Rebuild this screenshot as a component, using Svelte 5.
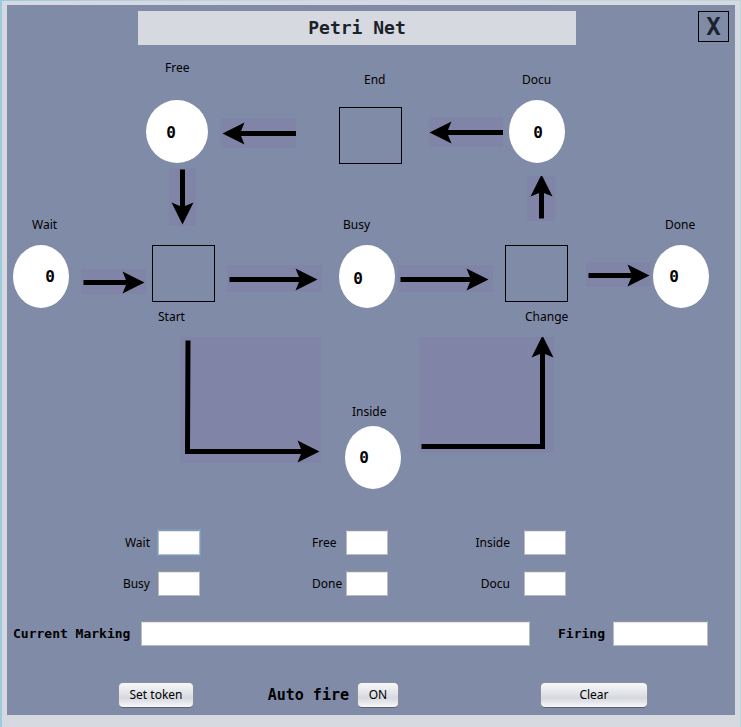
<script>
  const places = [
    { id: 'free', name: 'Free', cx: 177, cy: 131.5, rx: 31, lx: 165, ly: 72, tx: 171, ty: 138 },
    { id: 'docu', name: 'Docu', cx: 537, cy: 131.5, rx: 28, lx: 522, ly: 84, tx: 538, ty: 138 },
    { id: 'wait', name: 'Wait', cx: 41, cy: 276.5, rx: 28, lx: 32, ly: 229, tx: 50, ty: 282 },
    { id: 'busy', name: 'Busy', cx: 367, cy: 276.5, rx: 28, lx: 343, ly: 229, tx: 358, ty: 284 },
    { id: 'done', name: 'Done', cx: 681, cy: 276.5, rx: 28, lx: 665, ly: 229, tx: 674, ty: 282 },
    { id: 'inside', name: 'Inside', cx: 373, cy: 457.5, rx: 28, lx: 352, ly: 416, tx: 364, ty: 463 }
  ];

  const transitions = [
    { name: 'End', x: 339.5, y: 107.5, lx: 364, ly: 84 },
    { name: 'Start', x: 152.5, y: 245.5, lx: 158, ly: 321 },
    { name: 'Change', x: 505.5, y: 245.5, lx: 525, ly: 321 }
  ];

  // box: tinted area [x, y, w, h]; line: shaft points; tip: head position and rotation
  const arcs = [
    { box: [221, 118, 75, 30], line: '296,133.5 238,133.5', tip: [222.5, 133.5, 180] },
    { box: [429, 117, 74, 30], line: '503,132.5 446,132.5', tip: [429.5, 132.5, 180] },
    { box: [169, 168, 27, 58], line: '182.5,169.5 182.5,208', tip: [182.5, 224.5, 90] },
    { box: [527, 176, 28, 45], line: '541.5,218.5 541.5,191', tip: [541.5, 174.5, -90] },
    { box: [81, 269, 65, 25], line: '83.5,282.5 128,282.5', tip: [144.5, 282.5, 0] },
    { box: [227, 265, 95, 27], line: '229.5,279.5 301,279.5', tip: [317.5, 279.5, 0] },
    { box: [398, 265, 95, 27], line: '400.5,279.5 472,279.5', tip: [488.5, 279.5, 0] },
    { box: [586, 262, 65, 25], line: '588.5,275.5 633,275.5', tip: [649.5, 275.5, 0] },
    { box: [180, 337, 141, 126], line: '188,340.5 187.5,451.5 303,451.5', tip: [319.5, 451.5, 0] },
    { box: [419, 337, 135, 116], line: '421.5,446.5 542.5,446.5 542.5,352', tip: [542.5, 335.5, -90] }
  ];

  const fields = [
    { id: 'wait', name: 'Wait', col: 'first' },
    { id: 'free', name: 'Free', col: 'second' },
    { id: 'inside', name: 'Inside', col: 'third' },
    { id: 'busy', name: 'Busy', col: 'first' },
    { id: 'done', name: 'Done', col: 'second' },
    { id: 'docu', name: 'Docu', col: 'third' }
  ];

  const blank = (value) => ({ free: value, docu: value, wait: value, busy: value, done: value, inside: value });

  let tokens = $state(blank(0));
  let entry = $state(blank(''));
  let active = $state('wait');
  let marking = $state('');
  let firing = $state('');
  let open = $state(true);

  function setTokens() {
    for (const key in entry) tokens[key] = Number(entry[key]) || 0;
  }

  function clearAll() {
    tokens = blank(0);
    entry = blank('');
    marking = '';
    firing = '';
  }
</script>

<div class="window">
  {#if open}
    <main class="panel">
      <header>
        <h1>Petri Net</h1>
        <button class="close" aria-label="Close" onclick={() => (open = false)}>X</button>
      </header>

      <svg class="net" viewBox="7 45 728 485" width="728" height="485" role="img" aria-label="Petri net diagram">
        {#each arcs as { box, line, tip }}
          <svg x={box[0]} y={box[1]} width={box[2]} height={box[3]} viewBox={box.join(' ')}>
            <rect class="tint" x={box[0]} y={box[1]} width={box[2]} height={box[3]} />
            <polyline class="shaft" points={line} />
            <path d="M0 0L-22 -11L-17.500 0L-22 11Z" transform="translate({tip[0]} {tip[1]}) rotate({tip[2]})" />
          </svg>
        {/each}
        {#each transitions as t}
          <rect class="transition" x={t.x} y={t.y} width="62" height="56" />
          <text class="name" x={t.lx} y={t.ly}>{t.name}</text>
        {/each}
        {#each places as p}
          <ellipse class="place" cx={p.cx} cy={p.cy} rx={p.rx} ry="31.5" />
          <text class="name" x={p.lx} y={p.ly}>{p.name}</text>
          <text class="token" x={p.tx} y={p.ty}>{tokens[p.id]}</text>
        {/each}
      </svg>

      <div class="fields">
        {#each fields as f}
          <label class={f.col} for={f.id}>{f.name}</label>
          <input
            id={f.id}
            class={[f.col, active === f.id && 'active']}
            type="text"
            bind:value={entry[f.id]}
            onfocus={() => (active = f.id)}
          />
        {/each}
      </div>

      <div class="status">
        <label for="marking">Current Marking</label>
        <input id="marking" type="text" bind:value={marking} />
        <label for="firing">Firing</label>
        <input id="firing" type="text" bind:value={firing} />
      </div>

      <div class="actions">
        <button class="set" onclick={setTokens}>Set token</button>
        <label for="auto">Auto fire</label>
        <button id="auto" class="auto">ON</button>
        <button class="clear" onclick={clearAll}>Clear</button>
      </div>
    </main>
  {/if}
</div>

<style>
  :global(body) {
    margin: 0;
    background: linear-gradient(90deg, #9ccbe0, #cfd8ea 50%, #b4d8dc);
  }

  .window {
    box-sizing: border-box;
    min-height: 100vh;
    padding: 4px 5px 12px;
    border: solid transparent;
    border-width: 1px 1px 0 2px;
    background: #d6d9e0 padding-box;
    font: 12px/16px "Noto Sans", sans-serif;
    color: #000;
  }

  .panel {
    min-height: calc(100vh - 17px);
    box-sizing: border-box;
    padding: 6px 0 7px;
    background: #808ba7;
  }

  header {
    display: grid;
    grid-template-columns: 131fr 438fr 122fr 31px;
    align-items: start;
    padding-right: 6px;
  }

  h1 {
    grid-column: 2;
    margin: 0;
    background: #d6d9e0;
    color: #1d212b;
    font: bold 18px/34px "DejaVu Sans Mono", monospace;
    text-align: center;
  }

  .close {
    grid-column: 4;
    height: 31px;
    padding: 0;
    border: 1px solid #000;
    background: none;
    color: #1b222d;
    font: bold 24px/28px "DejaVu Sans Mono", monospace;
  }

  .net {
    display: block;
    max-width: 100%;
    margin: 0 auto;
  }

  .tint {
    fill: #8085a7;
  }

  .shaft {
    fill: none;
    stroke: #000;
    stroke-width: 5;
  }

  .transition {
    fill: none;
    stroke: #000;
  }

  .place {
    fill: #fff;
  }

  .name {
    font: 12px "Noto Sans", sans-serif;
  }

  .token {
    font: bold 16px "DejaVu Sans Mono", monospace;
    text-anchor: middle;
  }

  input {
    box-sizing: border-box;
    width: 100%;
    min-width: 0;
    height: 25px;
    padding: 2px 4px;
    border: 1px solid #b9bbbf;
    border-top-color: #92959c;
    border-radius: 0;
    outline: none;
    background: #fff;
    box-shadow: inset 0 1px #e4e5e8;
    font: inherit;
  }

  input.active {
    box-shadow: 0 0 0 1px #6f9fca, inset 0 1px #e4e5e8;
  }

  .fields {
    display: grid;
    grid-template-columns: 151fr 42px 146fr 42px 136fr 42px 169fr;
    row-gap: 16px;
    align-items: center;
  }

  label.first {
    grid-column: 1;
    margin-right: 8px;
    text-align: right;
  }

  input.first {
    grid-column: 2;
  }

  label.second {
    grid-column: 3;
    justify-self: end;
    width: 34px;
  }

  input.second {
    grid-column: 4;
  }

  label.third {
    grid-column: 5;
    margin-right: 14px;
    text-align: right;
  }

  input.third {
    grid-column: 6;
  }

  .status {
    display: grid;
    grid-template-columns: 120px 389fr 67px 95fr;
    column-gap: 8px;
    align-items: center;
    margin-top: 25px;
    padding: 0 27px 0 6px;
    font: bold 13px/16px "DejaVu Sans Mono", monospace;
  }

  .status label {
    white-space: nowrap;
  }

  .status label[for="firing"] {
    text-align: right;
  }

  .actions {
    display: grid;
    grid-template-columns: 111fr 76px 163fr 42px 141fr 108px 87fr;
    align-items: center;
    margin-top: 36px;
  }

  .actions label {
    grid-column: 3;
    justify-self: end;
    margin-right: 8px;
    font: bold 15px/20px "DejaVu Sans Mono", monospace;
  }

  .actions button {
    height: 26px;
    padding: 0;
    border: 1px solid #8b8f99;
    border-bottom-color: #5c616c;
    border-radius: 5px;
    background: linear-gradient(#f7f8fa, #e0e2e7 45%, #d5d8de 62%, #f5f7fb);
    color: #000;
    font: inherit;
    white-space: nowrap;
  }

  .actions .set {
    grid-column: 2;
  }

  .actions .auto {
    grid-column: 4;
  }

  .actions .clear {
    grid-column: 6;
  }
</style>
